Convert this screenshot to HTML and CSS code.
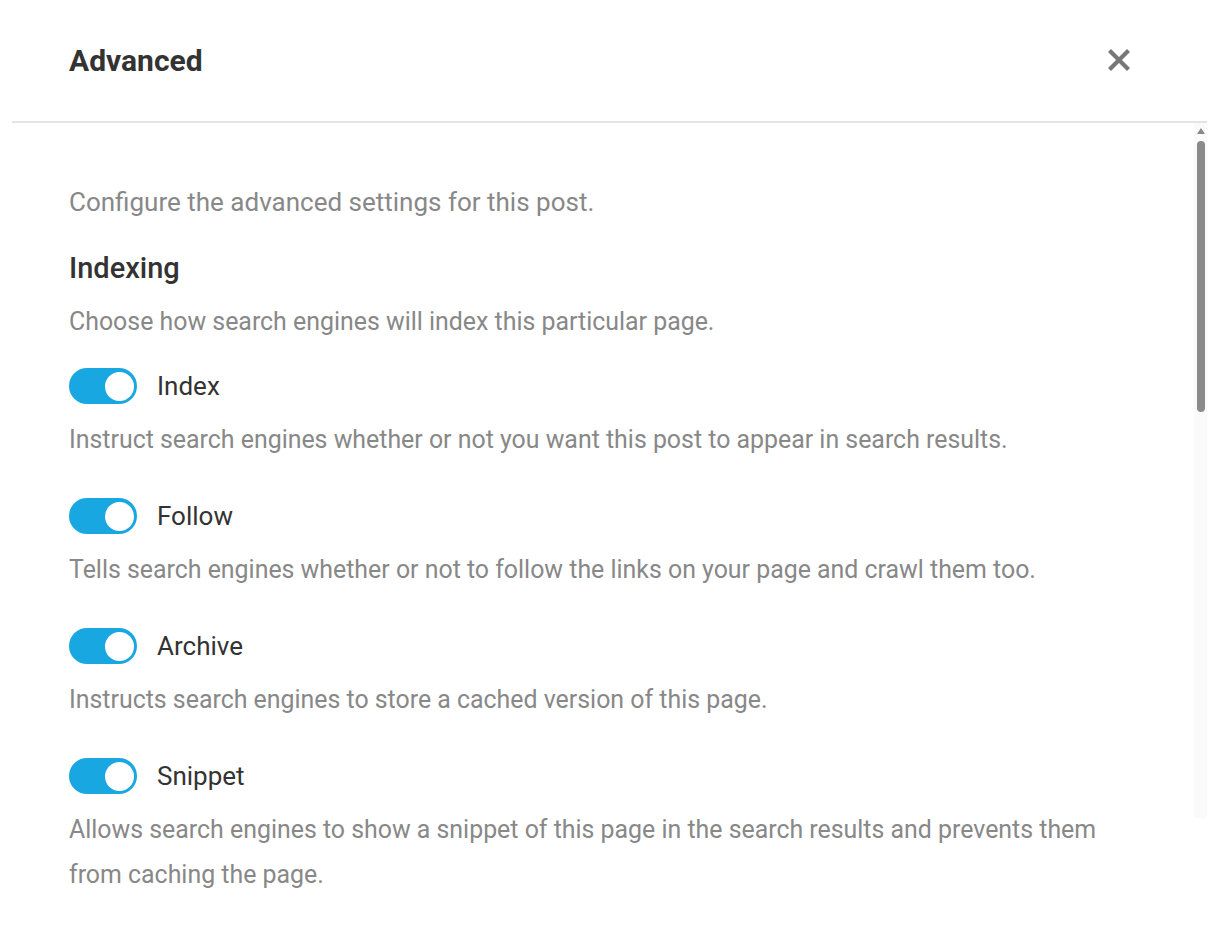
FILE: index.html
```html
<!DOCTYPE html>
<html lang="en">
<head>
<meta charset="utf-8">
<title>Advanced</title>
<link rel="stylesheet" href="styles.css">
</head>
<body>
<div class="modal">
  <header class="modal-header">
    <h2 class="modal-title">Advanced</h2>
    <button class="close-btn" aria-label="Close">
      <svg width="24" height="24" viewBox="0 0 24 24"><path d="M2.5 2.5 L21.5 21.5 M21.5 2.5 L2.5 21.5" stroke="#777" stroke-width="4.2" fill="none"/></svg>
    </button>
  </header>
  <div class="modal-body">
    <p class="intro">Configure the advanced settings for this post.</p>
    <h3 class="section-title">Indexing</h3>
    <p class="section-desc">Choose how search engines will index this particular page.</p>

    <div class="option">
      <label class="toggle-row"><span class="toggle on"><span class="knob"></span></span><span class="label">Index</span></label>
      <p class="desc">Instruct search engines whether or not you want this post to appear in search results.</p>
    </div>
    <div class="option">
      <label class="toggle-row"><span class="toggle on"><span class="knob"></span></span><span class="label">Follow</span></label>
      <p class="desc">Tells search engines whether or not to follow the links on your page and crawl them too.</p>
    </div>
    <div class="option">
      <label class="toggle-row"><span class="toggle on"><span class="knob"></span></span><span class="label">Archive</span></label>
      <p class="desc">Instructs search engines to store a cached version of this page.</p>
    </div>
    <div class="option">
      <label class="toggle-row"><span class="toggle on"><span class="knob"></span></span><span class="label">Snippet</span></label>
      <p class="desc">Allows search engines to show a snippet of this page in the search results and prevents them from caching the page.</p>
    </div>
  </div>
  <div class="scrollbar">
    <span class="arrow"></span>
    <span class="thumb"></span>
  </div>
</div>
</body>
</html>
```

FILE: styles.css
```css
* { box-sizing: border-box; }
html, body {
  margin: 0;
  padding: 0;
  background: #fff;
  font-family: Roboto, "Noto Sans", Arial, sans-serif;
}
body { overflow: hidden; height: 932px; }

.modal {
  position: relative;
  margin-left: 12px;
  width: 1195px;
  height: 932px;
}

.modal-header {
  height: 123px;
  border-bottom: 2px solid #e4e4e4;
  display: flex;
  align-items: center;
  justify-content: space-between;
  padding: 0 76px 0 57px;
}
.modal-title {
  margin: 0;
  font-size: 30px;
  font-weight: 700;
  color: #333;
  line-height: 36px;
}
.close-btn {
  background: none;
  border: 0;
  padding: 0;
  width: 24px;
  height: 24px;
  display: flex;
  cursor: pointer;
  margin-bottom: 1px;
}

.modal-body {
  padding: 63px 70px 0 57px;
}
.intro {
  margin: 0;
  font-size: 26px;
  line-height: 32px;
  color: #888;
}
.section-title {
  margin: 32px 0 0;
  font-size: 29px;
  line-height: 36px;
  font-weight: 500;
  color: #333;
}
.section-desc {
  margin: 20px 0 0;
  font-size: 24.9px;
  line-height: 32px;
  color: #888;
}
.option { margin-top: 30px; }
.option + .option { margin-top: 36px; }

.toggle-row {
  display: flex;
  align-items: center;
  gap: 20px;
  height: 36px;
}
.toggle {
  width: 68px;
  height: 36px;
  border-radius: 18px;
  background: #18a7e1;
  position: relative;
  flex: none;
}
.knob {
  position: absolute;
  top: 3.5px;
  right: 3px;
  width: 29px;
  height: 29px;
  border-radius: 50%;
  background: #fff;
}
.label {
  font-size: 26px;
  color: #333;
  line-height: 36px;
}
.desc {
  margin: 13px 0 0;
  font-size: 24.9px;
  line-height: 45px;
  color: #888;
}

.scrollbar {
  position: absolute;
  top: 123px;
  right: 0;
  width: 13px;
  height: 695px;
  background: #fafafa;
}
.arrow {
  position: absolute;
  top: 5px;
  left: 3px;
  width: 0;
  height: 0;
  border-left: 4px solid transparent;
  border-right: 4px solid transparent;
  border-bottom: 6px solid #888;
}
.thumb {
  position: absolute;
  top: 18px;
  left: 3px;
  width: 8px;
  height: 271px;
  border-radius: 4px;
  background: #8a8a8a;
}
```
